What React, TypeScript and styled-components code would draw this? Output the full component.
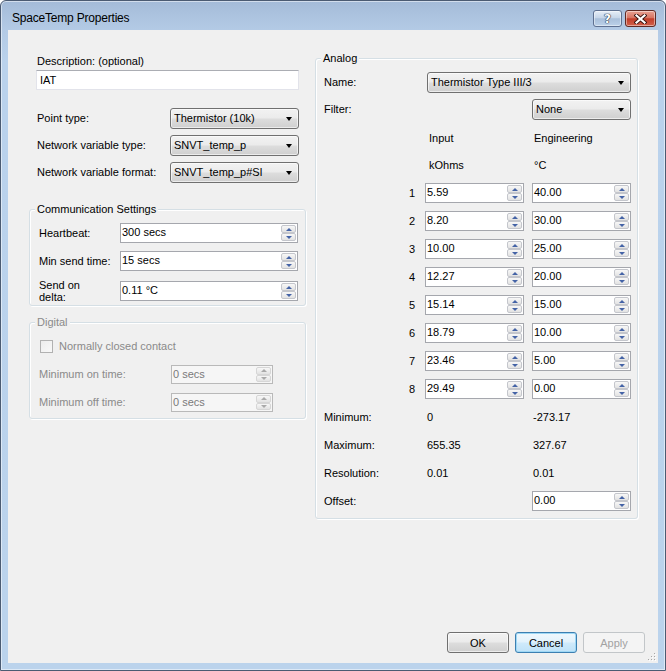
import React from 'react';
import styled, { createGlobalStyle, css } from 'styled-components';

const Global = createGlobalStyle`
  html, body { margin: 0; padding: 0; background: #ffffff; overflow: hidden; }
  body { font-family: "Liberation Sans", Arial, sans-serif; font-size: 11px; color: #000; }
  #root { width: 666px; height: 671px; }
  * { box-sizing: border-box; }
`;

const Window = styled.div`
  width: 666px;
  height: 671px;
  display: flex;
  flex-direction: column;
  border: 1px solid #4b5b72;
  border-radius: 6px 6px 0 0;
  background: linear-gradient(#a4bbd8 0px, #b3cae5 28px, #bad2ec 60px, #bbd3ec 100%);
  box-shadow: inset 0 0 0 1px rgba(255, 255, 255, 0.5);
  overflow: hidden;
`;

const TitleBar = styled.div`
  height: 29px;
  flex: none;
  display: flex;
  align-items: flex-start;
  padding: 9px 9px 0 11px;
`;

const TitleText = styled.div`
  flex: 1;
  margin-top: 1px;
  font-size: 12px;
  line-height: 14px;
  letter-spacing: -0.2px;
  color: #000;
`;

const CaptionButtons = styled.div`
  display: flex;
  gap: 3px;
`;

const CaptionButton = styled.div<{ $variant: 'help' | 'close' }>`
  height: 17px;
  width: ${p => (p.$variant === 'close' ? 31 : 29)}px;
  border-radius: 3px;
  display: flex;
  align-items: center;
  justify-content: center;
  box-shadow: inset 0 0 0 1px rgba(255, 255, 255, 0.45);
  ${p =>
    p.$variant === 'close'
      ? css`
          border: 1px solid #5f2a24;
          background: linear-gradient(#e8a293 0%, #d77462 45%, #c13d29 52%, #d2614c 100%);
        `
      : css`
          border: 1px solid #5e7090;
          background: linear-gradient(#e6eef7 0%, #c7d6e9 45%, #a9bfda 52%, #bcd1e9 100%);
        `}
`;

const HelpGlyph = styled.span`
  font-family: "DejaVu Sans", sans-serif;
  font-weight: bold;
  font-size: 12px;
  line-height: 12px;
  color: #fff;
  text-shadow: 0 0 1px #1e2c44, 0 0 1px #1e2c44, 0 0 1px #1e2c44;
`;

const Client = styled.div`
  flex: 1;
  margin: 0 7px 7px 7px;
  background: #f0f0f0;
  display: flex;
  flex-direction: column;
  position: relative;
`;

const Body = styled.div`
  display: grid;
  grid-template-columns: 277px 323px;
  column-gap: 9px;
  align-items: start;
  padding: 24px 20px 0 21px;
`;

const LeftColumn = styled.div`
  display: flex;
  flex-direction: column;
`;

const TopFields = styled.div`
  display: flex;
  flex-direction: column;
  padding: 0 7px;
`;

const Label = styled.div<{ $disabled?: boolean }>`
  line-height: 13px;
  padding-left: 1px;
  white-space: nowrap;
  color: ${p => (p.$disabled ? '#8a8a8a' : '#000')};
`;

const DescLabel = styled(Label)`
  height: 14px;
  line-height: 14px;
`;

const TextBox = styled.div`
  margin-top: 2px;
  height: 20px;
  background: #fff;
  border: 1px solid #e2e3ea;
  border-top-color: #abadb3;
  padding-left: 3px;
  line-height: 18px;
`;

const FieldRows = styled.div`
  display: flex;
  flex-direction: column;
  gap: 6px;
  margin-top: 18px;
`;

const FieldRow = styled.div`
  display: grid;
  grid-template-columns: 134px 129px;
  align-items: center;
  height: 21px;
`;

const ComboBox = styled.div<{ $col?: string; $ml?: number }>`
  position: relative;
  height: 21px;
  border: 1px solid #707070;
  border-radius: 3px;
  background: linear-gradient(#f2f2f2 0%, #ebebeb 48%, #dddddd 52%, #cfcfcf 100%);
  box-shadow: inset 0 0 0 1px rgba(255, 255, 255, 0.6);
  padding: 0 18px 0 3px;
  line-height: 19px;
  white-space: nowrap;
  ${p => p.$col && css`grid-column: ${p.$col};`}
  margin-left: ${p => p.$ml ?? 0}px;
  &::after {
    content: '';
    position: absolute;
    right: 6px;
    top: 8px;
    border-left: 3.5px solid transparent;
    border-right: 3.5px solid transparent;
    border-top: 4px solid #000;
  }
`;

const GroupBox = styled.div<{ $mt: number; $pad: string }>`
  position: relative;
  margin-top: ${p => p.$mt}px;
  border: 1px solid #d5dfe5;
  border-radius: 3px;
  box-shadow: inset 1px 1px 0 #ffffff, 1px 1px 0 #ffffff;
  padding: ${p => p.$pad};
`;

const Legend = styled.span<{ $disabled?: boolean }>`
  position: absolute;
  top: -7px;
  left: 5px;
  padding: 0 2px;
  line-height: 13px;
  background: #f0f0f0;
  color: ${p => (p.$disabled ? '#8a8a8a' : '#000')};
`;

const GroupRows = styled.div<{ $gap: number }>`
  display: flex;
  flex-direction: column;
  gap: ${p => p.$gap}px;
`;

const GroupRow = styled.div<{ $cols: string; $h: number }>`
  display: grid;
  grid-template-columns: ${p => p.$cols};
  align-items: center;
  height: ${p => p.$h}px;
`;

const TwoLine = styled(Label)`
  line-height: 12px;
`;

const Spin = styled.div<{ $disabled?: boolean; $h?: number }>`
  display: flex;
  height: ${p => p.$h ?? 20}px;
  border: 1px solid ${p => (p.$disabled ? '#b9b9b9' : '#a5a7ad')};
  background: ${p => (p.$disabled ? '#f6f6f6' : '#ffffff')};
  color: ${p => (p.$disabled ? '#7a7a7a' : '#000')};
`;

const SpinText = styled.span`
  flex: 1;
  padding-left: 1px;
  line-height: 17px;
  white-space: nowrap;
  overflow: hidden;
`;

const SpinButtons = styled.div`
  width: 16px;
  display: flex;
  flex-direction: column;
  padding: 1px 1px 1px 0;
`;

const SpinButton = styled.div<{ $dir: 'up' | 'down'; $disabled?: boolean }>`
  flex: 1;
  display: flex;
  align-items: center;
  justify-content: center;
  border: 1px solid ${p => (p.$disabled ? '#d6d6d6' : '#c4c6cc')};
  border-radius: 2px;
  background: linear-gradient(#f7f7f7, #e2e2e2);
  &::before {
    content: '';
    border-left: 3px solid transparent;
    border-right: 3px solid transparent;
    ${p =>
      p.$dir === 'up'
        ? css`border-bottom: 3px solid ${p.$disabled ? '#a9a9a9' : '#4463a6'};`
        : css`border-top: 3px solid ${p.$disabled ? '#a9a9a9' : '#4463a6'};`}
  }
`;

const CheckRow = styled.div`
  display: flex;
  align-items: center;
  gap: 5px;
  height: 16px;
  margin-left: 2px;
  margin-bottom: 11px;
`;

const CheckBox = styled.div`
  width: 13px;
  height: 13px;
  border: 1px solid #b1b1b1;
  background: linear-gradient(135deg, #ececec, #f8f8f8);
`;

const AnalogRows = styled.div`
  display: flex;
  flex-direction: column;
`;

const AnalogRow = styled.div<{ $h: number; $mt?: number }>`
  display: grid;
  grid-template-columns: 101px 99px 8px 99px;
  align-items: center;
  height: ${p => p.$h}px;
  margin-top: ${p => p.$mt ?? 0}px;
`;

const Cell = styled.div<{ $indent?: number; $col?: number; $right?: boolean }>`
  line-height: 13px;
  white-space: nowrap;
  padding-left: ${p => p.$indent ?? 0}px;
  ${p => p.$col && css`grid-column: ${p.$col};`}
  ${p =>
    p.$right &&
    css`
      text-align: right;
      padding-right: 10px;
    `}
`;

const SpinCell = styled.div<{ $col: number }>`
  grid-column: ${p => p.$col};
`;

const Footer = styled.div`
  margin-top: auto;
  display: flex;
  justify-content: flex-end;
  gap: 6px;
  padding: 0 13px 10px 0;
`;

const Button = styled.div<{ $kind?: 'default' | 'focus' | 'disabled' }>`
  width: 62px;
  height: 21px;
  border-radius: 3px;
  display: flex;
  align-items: center;
  justify-content: center;
  ${p =>
    p.$kind === 'focus'
      ? css`
          border: 1px solid #3c7fb1;
          background: linear-gradient(#f0f8fd 0%, #e2f2fc 48%, #cfeafb 52%, #bfe2f8 100%);
          box-shadow: inset 0 0 0 1px #9fd8f5;
          color: #000;
        `
      : p.$kind === 'disabled'
      ? css`
          border: 1px solid #c2c6c9;
          background: #f4f4f4;
          color: #a2a2a2;
        `
      : css`
          border: 1px solid #707070;
          background: linear-gradient(#f2f2f2 0%, #ebebeb 48%, #dddddd 52%, #cfcfcf 100%);
          box-shadow: inset 0 0 0 1px rgba(255, 255, 255, 0.6);
          color: #000;
        `}
`;

const Grip = styled.svg`
  position: absolute;
  right: 1px;
  bottom: 1px;
`;

function SpinBox({ value, disabled, h }: { value: string; disabled?: boolean; h?: number }) {
  return (
    <Spin $disabled={disabled} $h={h}>
      <SpinText>{value}</SpinText>
      <SpinButtons>
        <SpinButton $dir="up" $disabled={disabled} />
        <SpinButton $dir="down" $disabled={disabled} />
      </SpinButtons>
    </Spin>
  );
}

const points: [string, string][] = [
  ['5.59', '40.00'],
  ['8.20', '30.00'],
  ['10.00', '25.00'],
  ['12.27', '20.00'],
  ['15.14', '15.00'],
  ['18.79', '10.00'],
  ['23.46', '5.00'],
  ['29.49', '0.00'],
];

export default function App() {
  return (
    <>
      <Global />
      <Window>
        <TitleBar>
          <TitleText>SpaceTemp Properties</TitleText>
          <CaptionButtons>
            <CaptionButton $variant="help">
              <HelpGlyph>?</HelpGlyph>
            </CaptionButton>
            <CaptionButton $variant="close">
              <svg width="13" height="10" viewBox="0 0 13 10">
                <path d="M2.5 1.5 L10.5 8.5 M10.5 1.5 L2.5 8.5" stroke="#3a1410" strokeWidth="4" strokeLinecap="square" />
                <path d="M2.5 1.5 L10.5 8.5 M10.5 1.5 L2.5 8.5" stroke="#ffffff" strokeWidth="2.2" strokeLinecap="square" />
              </svg>
            </CaptionButton>
          </CaptionButtons>
        </TitleBar>
        <Client>
          <Body>
            <LeftColumn>
              <TopFields>
                <DescLabel>Description: (optional)</DescLabel>
                <TextBox>IAT</TextBox>
                <FieldRows>
                  <FieldRow>
                    <Label>Point type:</Label>
                    <ComboBox>Thermistor (10k)</ComboBox>
                  </FieldRow>
                  <FieldRow>
                    <Label>Network variable type:</Label>
                    <ComboBox>SNVT_temp_p</ComboBox>
                  </FieldRow>
                  <FieldRow>
                    <Label>Network variable format:</Label>
                    <ComboBox>SNVT_temp_p#SI</ComboBox>
                  </FieldRow>
                </FieldRows>
              </TopFields>

              <GroupBox $mt={26} $pad="13px 7px 6px 8px">
                <Legend>Communication Settings</Legend>
                <GroupRows $gap={8}>
                  <GroupRow $cols="82px 178px" $h={20}>
                    <Label>Heartbeat:</Label>
                    <SpinBox value="300 secs" />
                  </GroupRow>
                  <GroupRow $cols="82px 178px" $h={20}>
                    <Label>Min send time:</Label>
                    <SpinBox value="15 secs" />
                  </GroupRow>
                  <GroupRow $cols="82px 178px" $h={20}>
                    <TwoLine>
                      Send on
                      <br />
                      delta:
                    </TwoLine>
                    <SpinBox value="0.11 °C" />
                  </GroupRow>
                </GroupRows>
              </GroupBox>

              <GroupBox $mt={16} $pad="15px 7px 6px 8px">
                <Legend $disabled>Digital</Legend>
                <CheckRow>
                  <CheckBox />
                  <Label $disabled>Normally closed contact</Label>
                </CheckRow>
                <GroupRows $gap={9}>
                  <GroupRow $cols="133px 102px" $h={19}>
                    <Label $disabled>Minimum on time:</Label>
                    <SpinBox value="0 secs" disabled h={19} />
                  </GroupRow>
                  <GroupRow $cols="133px 102px" $h={19}>
                    <Label $disabled>Minimum off time:</Label>
                    <SpinBox value="0 secs" disabled h={19} />
                  </GroupRow>
                </GroupRows>
              </GroupBox>
            </LeftColumn>

            <GroupBox $mt={4} $pad="13px 6px 3px 8px">
              <Legend>Analog</Legend>
              <AnalogRows>
                <AnalogRow $h={21}>
                  <Cell>Name:</Cell>
                  <ComboBox $col="2 / 5" $ml={2}>Thermistor Type III/3</ComboBox>
                </AnalogRow>
                <AnalogRow $h={21} $mt={6}>
                  <Cell>Filter:</Cell>
                  <ComboBox $col="4">None</ComboBox>
                </AnalogRow>
                <AnalogRow $h={28} $mt={4}>
                  <Cell $col={2} $indent={4}>Input</Cell>
                  <Cell $col={4} $indent={2}>Engineering</Cell>
                </AnalogRow>
                <AnalogRow $h={27}>
                  <Cell $col={2} $indent={4}>kOhms</Cell>
                  <Cell $col={4} $indent={2}>°C</Cell>
                </AnalogRow>
                {points.map(([a, b], i) => (
                  <AnalogRow $h={28} key={i}>
                    <Cell $right>{i + 1}</Cell>
                    <SpinCell $col={2}>
                      <SpinBox value={a} />
                    </SpinCell>
                    <SpinCell $col={4}>
                      <SpinBox value={b} />
                    </SpinCell>
                  </AnalogRow>
                ))}
                <AnalogRow $h={28}>
                  <Cell>Minimum:</Cell>
                  <Cell $col={2} $indent={2}>0</Cell>
                  <Cell $col={4} $indent={1}>-273.17</Cell>
                </AnalogRow>
                <AnalogRow $h={28}>
                  <Cell>Maximum:</Cell>
                  <Cell $col={2} $indent={2}>655.35</Cell>
                  <Cell $col={4} $indent={1}>327.67</Cell>
                </AnalogRow>
                <AnalogRow $h={28}>
                  <Cell>Resolution:</Cell>
                  <Cell $col={2} $indent={2}>0.01</Cell>
                  <Cell $col={4} $indent={1}>0.01</Cell>
                </AnalogRow>
                <AnalogRow $h={28}>
                  <Cell>Offset:</Cell>
                  <SpinCell $col={4}>
                    <SpinBox value="0.00" />
                  </SpinCell>
                </AnalogRow>
              </AnalogRows>
            </GroupBox>
          </Body>

          <Footer>
            <Button>OK</Button>
            <Button $kind="focus">Cancel</Button>
            <Button $kind="disabled">Apply</Button>
          </Footer>
          <Grip width="10" height="10" viewBox="0 0 10 10">
            {[
              [8, 2],
              [8, 5],
              [5, 5],
              [8, 8],
              [5, 8],
              [2, 8],
            ].map(([x, y], i) => (
              <g key={i}>
                <rect x={x} y={y} width="1" height="1" fill="#ffffff" />
                <rect x={x - 1} y={y - 1} width="1" height="1" fill="#a6a6a6" />
              </g>
            ))}
          </Grip>
        </Client>
      </Window>
    </>
  );
}
